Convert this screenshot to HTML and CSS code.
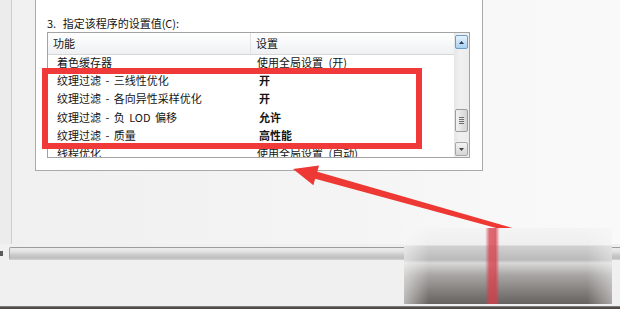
FILE: index.html
```html
<!DOCTYPE html>
<html lang="zh-CN">
<head>
    <meta charset="UTF-8">
    <meta name="viewport" content="width=device-width, initial-scale=1.0">
    <title>管理 3D 设置</title>
    <link rel="stylesheet" href="styles.css">
</head>
<body>
    <div class="screen">
        <div class="top">
            <div class="rail"></div>
            <div class="pane">
                <div class="group">
                    <div class="caption">3. 指定该程序的设置值(C):</div>
                    <div class="list">
                        <div class="list-main">
                            <div class="list-head">
                                <span class="col-a">功能</span>
                                <span class="col-b">设置</span>
                            </div>
                            <div class="list-body">
                                <div class="row"><span class="col-a">着色缓存器</span><span class="col-b">使用全局设置 (开)</span></div>
                                <div class="row"><span class="col-a">纹理过滤 - 三线性优化</span><span class="col-b strong">开</span></div>
                                <div class="row"><span class="col-a">纹理过滤 - 各向异性采样优化</span><span class="col-b strong">开</span></div>
                                <div class="row"><span class="col-a">纹理过滤 - 负 LOD 偏移</span><span class="col-b strong">允许</span></div>
                                <div class="row"><span class="col-a">纹理过滤 - 质量</span><span class="col-b strong">高性能</span></div>
                                <div class="row"><span class="col-a">线程优化</span><span class="col-b">使用全局设置 (自动)</span></div>
                            </div>
                        </div>
                        <div class="vscroll">
                            <div class="sb-btn sb-up">
                                <svg width="5" height="3" viewBox="0 0 5 3"><path d="M0 3 L2.5 0 L5 3 Z" fill="#2c3a4a"/></svg>
                            </div>
                            <div class="sb-thumb">
                                <span class="grip"></span>
                            </div>
                            <div class="sb-btn sb-down">
                                <svg width="5" height="3" viewBox="0 0 5 3"><path d="M0 0 L5 0 L2.5 3 Z" fill="#444"/></svg>
                            </div>
                        </div>
                    </div>
                </div>
            </div>
        </div>
        <div class="hbar-row">
            <span class="stub"></span>
            <div class="hbar"></div>
        </div>
        <div class="bottom"></div>
        <div class="edge"></div>

        <div class="highlight"></div>
        <svg class="arrow" width="620" height="309" viewBox="0 0 620 309">
            <polygon points="293,169 319,165.5 317.3,171.8 530,233 529,237 315.1,178.8 313.4,185.3" fill="#ee3833"/>
        </svg>
        <div class="smudge"></div>
    </div>
</body>
</html>
```

FILE: styles.css
```css
body {
    margin: 0;
    font-family: "Noto Sans CJK SC", "Liberation Sans", sans-serif;
    font-size: 11px;
    color: #141414;
    background: #f0f0f0;
}
.screen {
    position: relative;
    width: 620px;
    height: 309px;
    overflow: hidden;
    display: flex;
    flex-direction: column;
}
.top {
    display: flex;
    height: 244px;
}
.rail {
    width: 11px;
    background: #ececec;
    border-right: 1px solid #cfcfcf;
}
.pane {
    flex: 1;
    padding-left: 23px;
    background: linear-gradient(to right, #f0f0f0, #f4f4f4 55%, #f8f8f8 80%, #f9f9f9);
}
.group {
    width: 423px;
    background: #fff;
    border: 1px solid #a9a9a9;
    border-top: none;
    padding: 0 12px 12px 11px;
}
.caption {
    height: 14px;
    line-height: 14px;
    padding-top: 16px;
    margin-bottom: 2px;
    word-spacing: 4px;
}
.list {
    display: flex;
    height: 124px;
    border: 1px solid #a3a3a3;
}
.list-main {
    flex: 1;
    display: flex;
    flex-direction: column;
    overflow: hidden;
}
.list-head {
    display: flex;
    height: 21px;
    line-height: 21px;
    background: linear-gradient(#ffffff, #f7f8f9 50%, #eff0f2);
    border-bottom: 1px solid #d6d6d6;
}
.list-head .col-a {
    width: 197px;
    padding-left: 5px;
    border-right: 1px solid #e2e2e2;
}
.list-head .col-b {
    padding-left: 5px;
}
.list-body {
    flex: 1;
    overflow: hidden;
}
.row {
    display: flex;
    height: 18px;
    line-height: 18px;
    white-space: pre;
    word-spacing: 2px;
}
.row:first-child {
    margin-top: -2px;
}
.row:nth-child(n+4) {
    position: relative;
    top: 1px;
}
.row .col-a {
    width: 193px;
    padding-left: 9px;
}
.row .col-b {
    padding-left: 7px;
    word-spacing: 3px;
}
.row .strong {
    font-weight: bold;
    padding-left: 9px;
}
.vscroll {
    width: 15px;
    background: linear-gradient(to right, #e6e6e6, #f0f0f0 40%, #ececec);
    display: flex;
    flex-direction: column;
    align-items: center;
    padding-top: 2px;
}
.sb-btn {
    width: 11px;
    height: 12px;
    border: 1px solid #a7a7a7;
    border-radius: 2px;
    display: flex;
    align-items: center;
    justify-content: center;
    background: linear-gradient(#f4f4f4, #e4e4e4 50%, #d6d6d6);
}
.sb-up {
    border-color: #6c9cc9;
    background: linear-gradient(#e8f3fd, #c7e1f8 50%, #a9d0f2);
}
.sb-thumb {
    width: 11px;
    height: 21px;
    margin-top: 60px;
    border: 1px solid #9b9b9b;
    border-radius: 2px;
    background: linear-gradient(to right, #f2f2f2, #e3e3e3 50%, #d4d4d4);
    display: flex;
    align-items: center;
    justify-content: center;
}
.grip {
    width: 5px;
    height: 7px;
    background: repeating-linear-gradient(#6f6f6f 0, #6f6f6f 1px, transparent 1px, transparent 2px);
}
.sb-down {
    margin-top: 10px;
}
.hbar-row {
    display: flex;
    align-items: center;
    height: 13px;
    margin-top: 3px;
}
.stub {
    width: 3px;
    height: 5px;
    margin-right: 6px;
    background: #5a5a5a;
}
.hbar {
    flex: 1;
    height: 13px;
    border-top: 1px solid #9c9c9c;
    border-left: 1px solid #a8a8a8;
    border-radius: 2px 0 0 2px;
    background: linear-gradient(#ececec, #e2e2e2 30%, #c9c9c9 60%, #bebebe 85%, #d6d6d6);
    box-sizing: border-box;
}
.bottom {
    flex: 1;
    background: #f0f0f0;
}
.edge {
    height: 3px;
    background: linear-gradient(#9a9691, #55504c 40%, #4b4744);
}
.highlight {
    position: absolute;
    left: 42px;
    top: 68px;
    width: 380px;
    height: 81px;
    box-sizing: border-box;
    border: 6px solid #f03a3a;
}
.arrow {
    position: absolute;
    left: 0;
    top: 0;
}
.smudge {
    position: absolute;
    left: 404px;
    top: 228px;
    width: 208px;
    height: 76px;
    background:
        linear-gradient(to right, rgba(250, 250, 250, 0.55), rgba(250, 250, 250, 0) 12%, rgba(250, 250, 250, 0) 88%, rgba(250, 250, 250, 0.45)),
        linear-gradient(to right, transparent 39%, rgba(214, 62, 74, 0.75) 41%, rgba(214, 62, 74, 0.8) 44%, transparent 46%),
        linear-gradient(#f4f4f4, #efefef 22%, #d0d0d0 24%, #c4c4c4 34%, #bababa 42%, #d8d8d8 46%, #a8a6a4 62%, #85817e 82%, #66625f);
}
```
